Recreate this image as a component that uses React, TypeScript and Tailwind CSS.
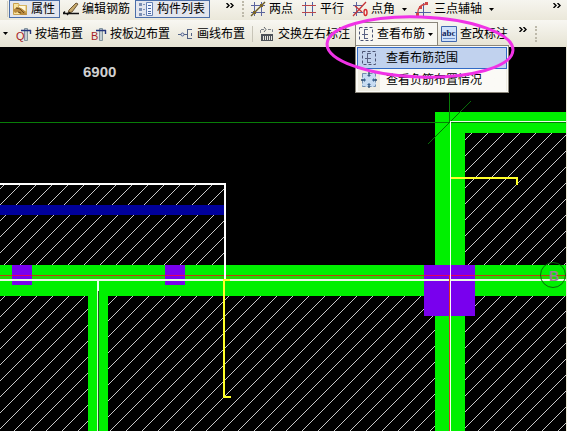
import { useState } from "react";
import type { ReactNode } from "react";

type ToolProps = {
  label: string;
  icon: ReactNode;
  active?: boolean;
  children?: ReactNode;
};

// toolbar button: icon + label, blue frame when pressed
function Tool({ label, icon, active, children }: ToolProps) {
  return (
    <button
      type="button"
      className={
        active
          ? "flex h-full shrink-0 items-center gap-[3px] border border-[#4a6ea9] bg-[#e3e6ee] pl-0.5 pr-1"
          : "flex h-full shrink-0 items-center gap-[3px] border border-transparent pl-0.5 pr-1"
      }
    >
      {icon}
      <span>{label}</span>
      {children}
    </button>
  );
}

function Icon({ children }: { children: ReactNode }) {
  return (
    <svg width="16" height="16" viewBox="0 0 16 16" fill="none" className="shrink-0" aria-hidden="true">
      {children}
    </svg>
  );
}

function Arrow() {
  return (
    <svg width="5" height="3" viewBox="0 0 5 3" className="shrink-0" aria-hidden="true">
      <path d="M0 0h5L2.5 3z" fill="#000" />
    </svg>
  );
}

function More() {
  return (
    <button type="button" aria-label="更多" className="mb-2 w-2 shrink-0">
      <svg width="8" height="5" viewBox="0 0 8 5" fill="none" stroke="#000" strokeWidth="1.4" aria-hidden="true">
        <path d="M.5 0 3 2.5.5 5M4.5 0 7 2.5 4.5 5" />
      </svg>
    </button>
  );
}

function Grip() {
  return <span className="h-4 w-0.5 shrink-0 border-l-2 border-dotted border-[#bdb9aa]" />;
}

const PropertyIcon = () => (
  <Icon>
    <path d="M1.5 2.5h5l1 2h7v9h-13z" fill="#f7e3a0" stroke="#c9a04d" />
    <path d="M6 4.5h8v6H9z" fill="#fff8dc" stroke="#d8b663" />
    <path d="m1 9 4-3 4 1 4 3 2 4H9L6 11l-3 1z" fill="#b98a3e" />
    <path d="m4 7 4 1 4 4M6 11l3 1" stroke="#6b4d20" />
  </Icon>
);

const EditRebarIcon = () => (
  <Icon>
    <path d="m6 9 7-7 2 1-6 8-4 1z" fill="#c5a86a" stroke="#6d5738" />
    <path d="M0 12.5h16M0 12.5l2-2M4 14l3-3" stroke="#111" strokeWidth="1.4" />
  </Icon>
);

const ListIcon = () => (
  <Icon>
    <path d="M1 2h3v3H1zM1 7h3v3H1zM1 12h3v3H1z" fill="#7b8fb4" />
    <path d="M5 3.5h2M5 8.5h2M5 13.5h2" stroke="#8293b4" />
    <path d="M8.5 1.5h6v13h-6z" fill="#f2f6ff" stroke="#6681b4" />
    <path d="M10 4.5h3M10 7.5h3M10 10.5h3M10 12.5h3" stroke="#4967a3" />
  </Icon>
);

const TwoPointIcon = () => (
  <Icon>
    <path d="M4.5 1v14M11.5 1v14M1 4.5h14M1 11.5h14" stroke="#5b659e" />
    <path d="M1 15 15 1" stroke="#6a5a24" strokeWidth="1.5" />
    <path d="M3 10h3v3H3zM10 3h3v3h-3z" fill="#7a6428" />
  </Icon>
);

const ParallelIcon = () => (
  <Icon>
    <path d="M4.5 1v14M11.5 1v14" stroke="#4b5fa5" />
    <path d="M1 4.5h14M1 11.5h14" stroke="#b9474c" strokeWidth="1.2" />
  </Icon>
);

const PointAngleIcon = () => (
  <Icon>
    <path d="M4.5 1v14M1 11.5h10M1 4.5h10" stroke="#5b659e" />
    <path d="M1 15 14 1M3 5l7 6" stroke="#c73538" strokeWidth="1.3" />
    <ellipse cx="13.5" cy="11.5" rx="1.5" ry="3" stroke="#d5262b" strokeWidth="1.4" />
  </Icon>
);

const ThreePointIcon = () => (
  <Icon>
    <path d="M8.500 2v14M0 11.5h16" stroke="#4c5fa0" />
    <path d="M3 14C2 7 6 3 12 3" stroke="#cf4747" strokeWidth="1.3" />
    <path d="M1 12h3v3H1zM4 5h3v3H4zM10 1h3v3h-3z" fill="#cf4747" />
  </Icon>
);

// Q / B placement marks share the same column drawing
function PlaceIcon({ mark }: { mark: string }) {
  return (
    <Icon>
      <path d="M8.5 2.500h3v12h-3z" fill="#c6d0d5" stroke="#83949c" />
      <path d="M5 4.5h10M14.5 4v4" stroke="#25367d" strokeWidth="1.4" />
      <text x="0" y="14" fill="#a62329" className="font-['Liberation_Sans',sans-serif] text-[11px]">{mark}</text>
    </Icon>
  );
}

const DrawLineIcon = () => (
  <Icon>
    <path d="M0 8.5h3M6 8.5h4M9.5 3v10M9.5 3.5H14M9.5 12.5H14M13.5 7v3" stroke="#536384" />
    <circle cx="4.5" cy="8.5" r="1.5" stroke="#4b5f95" />
  </Icon>
);

const SwapIcon = () => (
  <Icon>
    <path d="M1.5 7V3.5H6M9 3.5h4.500V7" stroke="#7c8187" strokeDasharray="3 1" />
    <path d="m5 1 2 2.500L5 6" stroke="#5d6268" />
    <path d="M2 8h12v7H2z" fill="#4d5258" />
    <path d="M4.5 10v4M6.5 10v4M8.5 10v4M10.5 10v4M12.5 10v4" stroke="#e6e6df" />
  </Icon>
);

const RangeIcon = () => (
  <Icon>
    <path d="M1.5 1.5h13v13h-13z" stroke="#4a5272" strokeDasharray="3 2" />
    <path d="M6.5 3v10M6.5 3.5H10M6.5 12.5H10M4 8.5h6" stroke="#5a6384" />
  </Icon>
);

const NegativeIcon = () => (
  <Icon>
    <path d="M1 1h14v14H1z" fill="#c7dcf2" />
    <path d="M1.5 1.5h13v13h-13z" stroke="#718eac" strokeDasharray="4 2" />
    <path d="M8 0v4M8 12v4M0 8h4M12 8h4" stroke="#294a70" strokeWidth="1.3" />
    <path d="M6 3h4L8 5zM6 13h4l-2-2zM3 6v4l2-2zM13 6v4l-2-2z" fill="#3a638f" />
  </Icon>
);

const AbcIcon = () => (
  <Icon>
    <path d="M.5.5h15v15H.5z" fill="#cfe1fa" stroke="#4168ae" />
    <path d="M2 12.5h12" stroke="#6e91c9" />
    <text x="1" y="10" fill="#10265c" className="font-['Liberation_Serif',serif] text-[9px] font-bold">abc</text>
  </Icon>
);

const menuItems = [
  { label: "查看布筋范围", icon: <RangeIcon /> },
  { label: "查看负筋布置情况", icon: <NegativeIcon /> },
];

function Drawing() {
  return (
    <svg width="100%" className="block min-h-96 flex-1 bg-black" role="img" aria-label="板配筋图">
      <defs>
        <pattern id="hatch" width="16" height="16" patternUnits="userSpaceOnUse">
          <path d="M-4 17 17-4M-4 33 33-4" stroke="#c8c8c8" strokeWidth="1" fill="none" shapeRendering="crispEdges" />
        </pattern>
      </defs>
      <g transform="translate(0 -47)" shapeRendering="crispEdges">
        {/* slabs */}
        <g fill="url(#hatch)">
          <rect x="0" y="184" width="224" height="82" />
          <rect x="465" y="133" width="100%" height="133" />
          <rect x="0" y="296" width="100%" height="100%" />
        </g>
        <rect x="0" y="205" width="224" height="10" fill="#00009b" />

        {/* beams */}
        <g fill="#00f000">
          <rect x="435" y="112" width="100%" height="21" />
          <rect x="435" y="112" width="30" height="100%" />
          <rect x="435" y="296" width="30" height="100%" />
          <rect x="0" y="265" width="100%" height="31" />
          <rect x="88" y="296" width="20" height="100%" />
        </g>
        <rect x="0" y="276" width="100%" height="3" fill="#20d800" />

        {/* columns */}
        <g fill="#7900ee">
          <rect x="12" y="265" width="20" height="20" />
          <rect x="165" y="265" width="20" height="20" />
          <rect x="424" y="265" width="51" height="51" />
        </g>

        {/* axes */}
        <rect x="0" y="275" width="100%" height="1" fill="#c03c10" />
        <rect x="12" y="275" width="20" height="1" fill="#e00060" />
        <rect x="165" y="275" width="20" height="1" fill="#e00060" />
        <rect x="424" y="275" width="51" height="1" fill="#e00060" />
        <rect x="0" y="279" width="100%" height="2" fill="#eafbe6" />
        <rect x="0" y="122" width="100%" height="1" fill="#087c08" />
        <rect x="449" y="92" width="1" height="30" fill="#087c08" />
        <path d="m428 144 43-43" stroke="#086c08" />
        <rect x="450" y="121" width="100%" height="1" fill="#e8ffe8" />
        <rect x="450" y="122" width="1" height="100%" fill="#f4fff4" />
        <rect x="449" y="275" width="1" height="100%" fill="#d83020" />
        <rect x="97" y="280" width="2" height="11" fill="#e6ffe6" />
        <rect x="97" y="291" width="1" height="100%" fill="#d5ffd5" />
        <rect x="98" y="291" width="1" height="100%" fill="#245c20" />

        {/* slab outline and rebar */}
        <path d="M0 184h225v96" fill="none" stroke="#fff" strokeWidth="2" />
        <path d="M230 280h-6v117h7M451 178h66v7" fill="none" stroke="#ffff28" strokeWidth="2" />

        <text x="83" y="77" fill="#d0d0d0" className="font-['Liberation_Sans',sans-serif] text-[15px] font-bold">6900</text>
      </g>
      {/* axis bubble stays on the right edge */}
      <svg x="100%" y="0" width="1" height="1" overflow="visible">
        <circle cx="-14" cy="228" r="12.5" fill="none" stroke="#086808" />
        <text x="-18" y="234" fill="#9a7f92" className="font-['Liberation_Sans',sans-serif] text-[14px] font-bold">B</text>
        <rect x="-1" y="0" width="1" height="2000" fill="#ece9d8" />
      </svg>
    </svg>
  );
}

export default function App() {
  const [open, setOpen] = useState(true);

  return (
    <div className="flex min-h-screen flex-col overflow-hidden whitespace-nowrap bg-[#f0eee3] font-['Liberation_Sans','Noto_Sans_CJK_SC',sans-serif] text-[12px] leading-4 text-black">
      {/* first toolbar */}
      <div className="flex h-5 items-center bg-linear-to-b from-[#f6f5ef] to-[#ebe8da] pb-0.5 pl-[7px]">
        <span className="mr-px h-4 w-px shrink-0 bg-[#d0cdc0]" />
        <Tool label="属性" icon={<PropertyIcon />} active />
        <Tool label="编辑钢筋" icon={<EditRebarIcon />} />
        <Tool label="构件列表" icon={<ListIcon />} active />
        <span className="w-4 shrink-0" />
        <More />
        <span className="w-2 shrink-0" />
        <Grip />
        <span className="w-[3px] shrink-0" />
        <Tool label="两点" icon={<TwoPointIcon />} />
        <Tool label="平行" icon={<ParallelIcon />} />
        <Tool label="点角" icon={<PointAngleIcon />}>
          <span className="pl-1"><Arrow /></span>
        </Tool>
        <Tool label="三点辅轴" icon={<ThreePointIcon />}>
          <span className="pl-1"><Arrow /></span>
        </Tool>
        <span className="flex-1" />
        <More />
        <span className="w-1.5 shrink-0" />
      </div>

      {/* second toolbar */}
      <div className="flex h-[27px] items-center bg-linear-to-b from-[#f8f7f2] to-[#e6e3d3] py-0.5 pl-[3px]">
        <Arrow />
        <span className="w-[5px] shrink-0" />
        <Tool label="按墙布置" icon={<PlaceIcon mark="Q" />} />
        <Tool label="按板边布置" icon={<PlaceIcon mark="B" />} />
        <Tool label="画线布置" icon={<DrawLineIcon />} />
        <span className="ml-0.5 mr-[3px] h-4 w-px shrink-0 bg-[#c8c5b8]" />
        <Tool label="交换左右标注" icon={<SwapIcon />} />

        <div className="relative flex h-full shrink-0">
          <button
            type="button"
            aria-expanded={open}
            onClick={() => setOpen(!open)}
            className="flex h-full items-center gap-[3px] border border-b-0 border-[#8a867a] bg-[#f8f7f1] pl-0.5 pr-1"
          >
            <RangeIcon />
            <span>查看布筋</span>
            <Arrow />
          </button>

          {open && (
            <div role="menu" className="absolute left-0 top-full z-10 border border-[#8a867a] bg-[#fbfaf6] p-px">
              {menuItems.map((item, i) => (
                <button
                  key={item.label}
                  type="button"
                  role="menuitem"
                  className={
                    i === 0
                      ? "flex h-[22px] w-full items-center gap-[9px] border border-[#316ac5] bg-[#c1d2ee] pl-[3px] pr-6"
                      : "flex h-[22px] w-full items-center gap-[9px] border border-transparent bg-linear-to-r from-[#efede3] from-[22px] to-[#fbfaf6] to-[22px] pl-[3px] pr-6"
                  }
                >
                  {item.icon}
                  <span>{item.label}</span>
                </button>
              ))}
            </div>
          )}

          {/* pink marker */}
          <svg width="192" height="68" className="pointer-events-none absolute -left-8 -top-2 z-20 max-w-none" aria-hidden="true">
            <ellipse cx="97" cy="33" rx="93" ry="30" transform="rotate(2 97 33)" fill="none" stroke="#f032e6" strokeWidth="3" />
          </svg>
        </div>

        <Tool label="查改标注" icon={<AbcIcon />} />
        <span className="w-1.5 shrink-0" />
        <More />
        <span className="w-2 shrink-0" />
        <Grip />
      </div>

      <Drawing />
    </div>
  );
}
